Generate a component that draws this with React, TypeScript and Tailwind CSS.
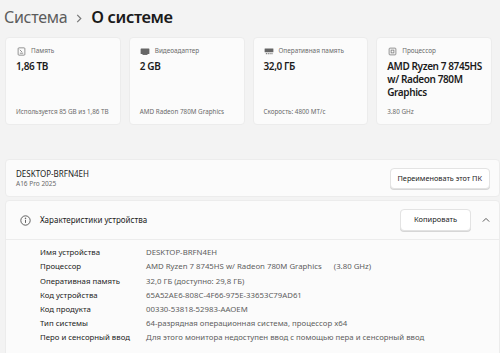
import React from 'react';

const font = { fontFamily: '"Noto Sans", "Open Sans", sans-serif' };

const DriveIcon = () => (
  <svg width="9" height="9" viewBox="0 0 16 16" fill="none" stroke="#777" strokeWidth="1.4">
    <rect x="2" y="1.5" width="12" height="13" rx="1.5" />
    <path d="M5 11h6M5 5l4 4" />
  </svg>
);

const GpuIcon = () => (
  <svg width="10" height="9" viewBox="0 0 16 14" fill="#666">
    <rect x="1" y="2" width="14" height="9" rx="1" />
    <rect x="4" y="11" width="8" height="1.5" />
  </svg>
);

const RamIcon = () => (
  <svg width="10" height="8" viewBox="0 0 16 12" fill="#666">
    <rect x="1" y="2" width="14" height="6" rx="0.5" />
    <path d="M3 9h1.5v2H3zM6 9h1.5v2H6zM9 9h1.5v2H9zM12 9h1.5v2H12z" />
  </svg>
);

const CpuIcon = () => (
  <svg width="9" height="9" viewBox="0 0 16 16" fill="none" stroke="#777" strokeWidth="1.4">
    <rect x="2" y="2" width="12" height="12" rx="1.5" />
    <rect x="5.5" y="5.5" width="5" height="5" />
  </svg>
);

interface CardProps {
  icon: React.ReactNode;
  label: string;
  value: string[];
  sub: string;
}

const SpecCard = ({ icon, label, value, sub }: CardProps) => (
  <div className="flex-1 basis-0 min-w-0 h-[88px] bg-[#fbfbfb] rounded-[4px] border border-[#ececec] px-[10px] pt-[7px] pb-[8px] flex flex-col">
    <div className="flex items-center gap-[5px] h-[12px]">
      <span className="flex w-[10px] justify-center">{icon}</span>
      <span className="text-[6.4px] text-[#6a6a6a] whitespace-nowrap">{label}</span>
    </div>
    <div className="mt-[3px] text-[10px] leading-[13px] font-semibold text-[#1b1b1b] tracking-[-0.4px] whitespace-nowrap">
      {value.map((l) => (
        <div key={l}>{l}</div>
      ))}
    </div>
    <div className="mt-auto text-[6.3px] leading-[8px] text-[#6a6a6a] whitespace-nowrap">{sub}</div>
  </div>
);

const rows: [string, string][] = [
  ['Имя устройства', 'DESKTOP-BRFN4EH'],
  ['Процессор', 'AMD Ryzen 7 8745HS w/ Radeon 780M Graphics\u00a0\u00a0\u00a0\u00a0\u00a0\u00a0(3.80 GHz)'],
  ['Оперативная память', '32,0 ГБ (доступно: 29,8 ГБ)'],
  ['Код устройства', '65A52AE6-808C-4F66-975E-33653C79AD61'],
  ['Код продукта', '00330-53818-52983-AAOEM'],
  ['Тип системы', '64-разрядная операционная система, процессор x64'],
  ['Перо и сенсорный ввод', 'Для этого монитора недоступен ввод с помощью пера и сенсорный ввод'],
];

const App = () => {
  return (
    <div className="w-[500px] h-[353px] overflow-hidden bg-[#f3f3f3]" style={font}>
      <div className="h-[34px] pl-[4px] flex items-center gap-[9px]">
        <span className="text-[16px] text-[#5c5c5c] tracking-[-0.3px]">Система</span>
        <svg width="6" height="9" viewBox="0 0 6 10" fill="none" stroke="#777" strokeWidth="1.3" className="mt-[2px]">
          <path d="M1 1l4 4-4 4" />
        </svg>
        <span className="text-[16.5px] font-semibold text-[#1a1a1a] tracking-[-0.4px]">О системе</span>
      </div>

      <div className="mt-[3px] px-[5px] flex gap-[8px] w-[497px]">
        <SpecCard icon={<DriveIcon />} label="Память" value={['1,86 TB']} sub="Используется 85 GB из 1,86 TB" />
        <SpecCard icon={<GpuIcon />} label="Видеоадаптер" value={['2 GB']} sub="AMD Radeon 780M Graphics" />
        <SpecCard icon={<RamIcon />} label="Оперативная память" value={['32,0 ГБ']} sub="Скорость: 4800 МТ/с" />
        <SpecCard
          icon={<CpuIcon />}
          label="Процессор"
          value={['AMD Ryzen 7 8745HS', 'w/ Radeon 780M', 'Graphics']}
          sub="3.80 GHz"
        />
      </div>

      <div className="mt-[34px] ml-[5px] w-[495px]">
        <div className="h-[38px] bg-[#fbfbfb] rounded-[4px] border border-[#ececec] flex items-center justify-between pl-[10px] pr-[9px]">
          <div className="flex flex-col">
            <span className="text-[8px] leading-[10px] text-[#1b1b1b]">DESKTOP-BRFN4EH</span>
            <span className="text-[6.5px] leading-[9px] text-[#6a6a6a]">A16 Pro 2025</span>
          </div>
          <button className="h-[21px] px-[7px] bg-white border border-[#e3e3e3] rounded-[4px] text-[7.3px] text-[#1b1b1b] shadow-[0_1px_0_#d6d6d6]">
            Переименовать этот ПК
          </button>
        </div>

        <div className="mt-[3px] bg-[#fbfbfb] rounded-t-[4px] border border-[#ececec]">
          <div className="h-[39px] flex items-center pl-[14px] pr-[7px] border-b border-[#ececec]">
            <svg width="11" height="11" viewBox="0 0 16 16" fill="none" stroke="#333" strokeWidth="1.1">
              <circle cx="8" cy="8" r="6.8" />
              <path d="M8 7v4.5" />
              <circle cx="8" cy="4.7" r="0.5" fill="#333" />
            </svg>
            <span className="ml-[9px] text-[8px] text-[#1b1b1b]">Характеристики устройства</span>
            <button className="ml-auto h-[22px] w-[71px] bg-white border border-[#e3e3e3] rounded-[4px] text-[7.5px] text-[#1b1b1b] shadow-[0_1px_0_#d6d6d6]">
              Копировать
            </button>
            <svg width="8" height="6" viewBox="0 0 10 6" fill="none" stroke="#555" strokeWidth="1.2" className="ml-[11px] mr-[2px]">
              <path d="M1 5l4-4 4 4" />
            </svg>
          </div>
          <div className="pl-[34px] pt-[6px] pb-[10px]">
            {rows.map(([k, v]) => (
              <div key={k} className="flex h-[14.2px] items-center text-[7.8px]">
                <span className="w-[106px] shrink-0 text-[#1b1b1b]">{k}</span>
                <span className="text-[#5e5e5e] whitespace-nowrap">{v}</span>
              </div>
            ))}
          </div>
        </div>
      </div>
    </div>
  );
};

export default App;
